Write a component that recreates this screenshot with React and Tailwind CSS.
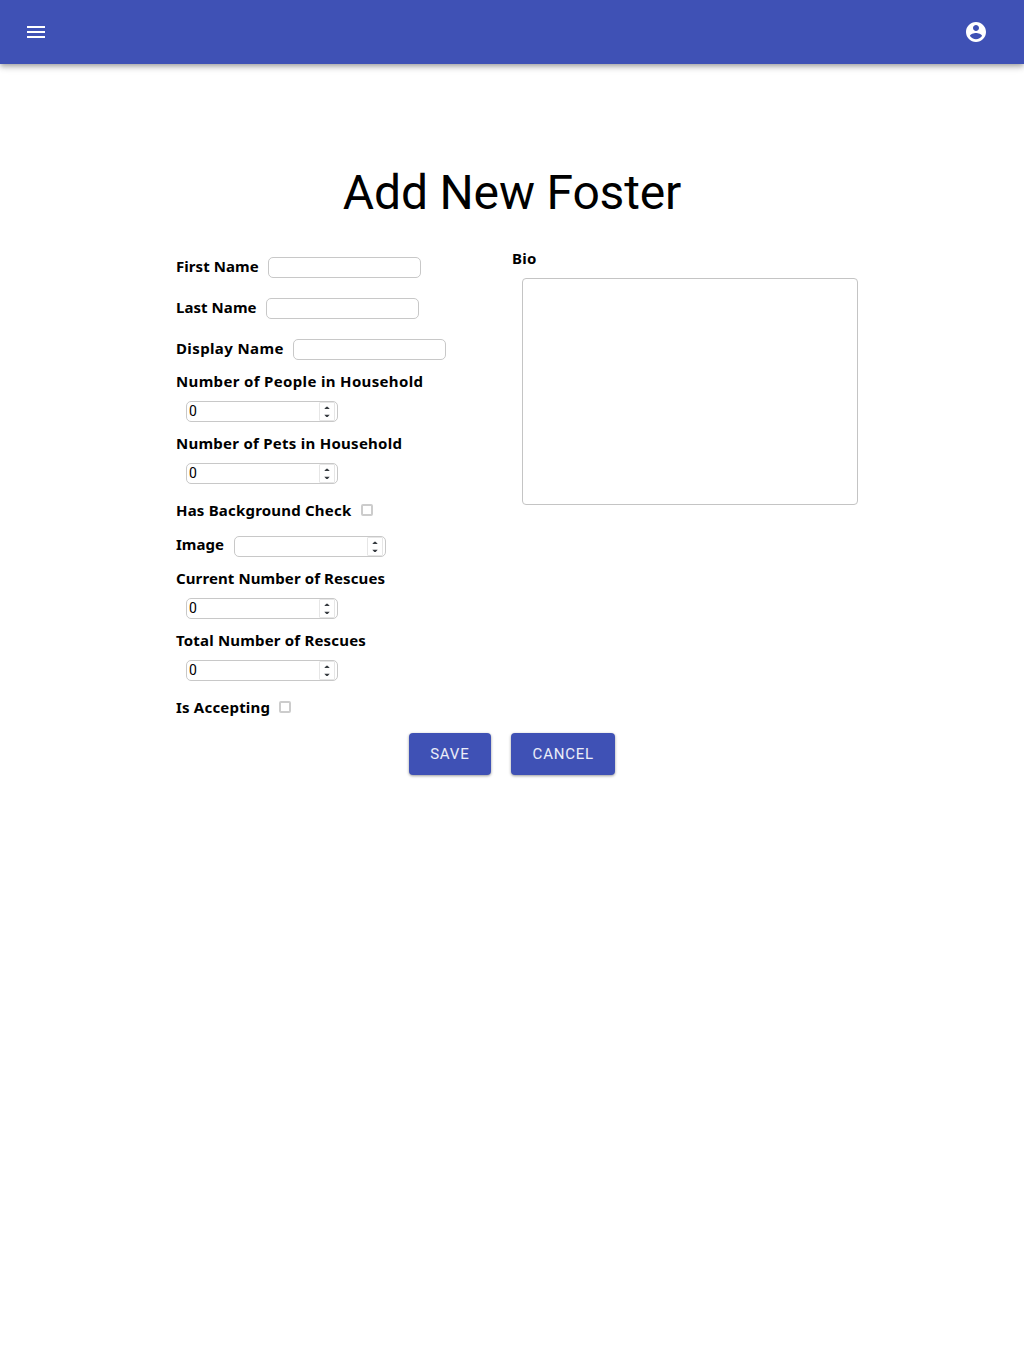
function Spinner() {
  return (
    <span className="mr-[2px] flex h-[19px] w-[16px] items-center justify-center rounded-[1px] border border-[#e6e6e6] bg-white">
      <svg width="6" height="13" viewBox="0 0 6 13" fill="#363b40">
        <path d="M0.3 4h5.4L3.7 1.8h-1.4zM0.3 9.8h5.4L3.7 12h-1.4z" />
      </svg>
    </span>
  );
}

function Field({ value, number, className = "" }) {
  return (
    <span className={`ml-[10px] flex h-[21px] shrink-0 justify-between rounded-[5px] border border-[#c8c8c8] bg-white pl-[2px] ${number ? "w-[152px]" : "w-[153px]"} ${className}`}>
      <span className="font-['Roboto',sans-serif] text-[14px] leading-[19px]">{value}</span>
      {number && <Spinner />}
    </span>
  );
}

function Label({ children, className = "" }) {
  return (
    <span className={`block shrink-0 whitespace-nowrap font-['Noto_Sans',sans-serif] text-[15px] font-bold leading-[22px] ${className}`}>
      {children}
    </span>
  );
}

function InlineField({ label, labelClass, ...rest }) {
  return (
    <div className="flex h-[41px] items-start pt-[10px]">
      <Label className={labelClass}>{label}</Label>
      <Field {...rest} />
    </div>
  );
}

function StackedField({ label, labelClass }) {
  return (
    <div className="h-[62px]">
      <Label className={labelClass}>{label}</Label>
      <Field value="0" number className="mt-[9px]" />
    </div>
  );
}

function CheckField({ label, labelClass }) {
  return (
    <div className="flex h-8 items-start pt-[5px]">
      <Label className={labelClass}>{label}</Label>
      <span className="ml-[10px] mt-[5px] h-[12px] w-[12px] rounded-[2px] border-2 border-[#cccccc]" />
    </div>
  );
}

function Button({ children, className }) {
  return (
    <button className={`h-[42px] rounded-[4px] bg-[#3f51b5] text-[15px] tracking-[0.8px] text-white/90 shadow-[0_1px_3px_rgba(0,0,0,0.4)] ${className}`}>
      {children}
    </button>
  );
}

export default function App() {
  return (
    <div className="min-h-screen bg-white font-['Roboto',sans-serif] text-black">
      <header className="flex h-16 items-center justify-between bg-[#3f51b5] pl-6 pr-9 text-white shadow-[0px_2px_4px_-1px_rgba(0,0,0,0.2),0px_4px_5px_0px_rgba(0,0,0,0.14),0px_1px_10px_0px_rgba(0,0,0,0.12)]">
        <svg width="24" height="24" viewBox="0 0 24 24" fill="currentColor">
          <path d="M3 18h18v-2H3v2zm0-5h18v-2H3v2zm0-7v2h18V6H3z" />
        </svg>
        <svg width="24" height="24" viewBox="0 0 24 24" fill="currentColor">
          <path d="M12 2C6.48 2 2 6.48 2 12s4.48 10 10 10 10-4.48 10-10S17.52 2 12 2zm0 3c1.66 0 3 1.34 3 3s-1.34 3-3 3-3-1.34-3-3 1.34-3 3-3zm0 14.2c-2.5 0-4.71-1.28-6-3.22.03-1.99 4-3.08 6-3.08 1.99 0 5.97 1.09 6 3.08-1.29 1.94-3.5 3.22-6 3.22z" />
        </svg>
      </header>
      <main className="pt-[101px]">
        <h1 className="h-14 text-center text-[48px] leading-[56px] tracking-[-0.17px]">Add New Foster</h1>
        <form className="mx-auto mt-[26px] grid w-[672px] grid-cols-2">
          <div>
            <InlineField label="First Name" labelClass="w-[82.4px] -mt-[2px] tracking-[0.06px]" />
            <InlineField label="Last Name" labelClass="w-[80.4px] -mt-[2px] tracking-[0.06px]" />
            <InlineField label="Display Name" labelClass="w-[107.4px] -mt-[2px] tracking-[0.38px]" />
            <StackedField label="Number of People in Household" labelClass="tracking-[0.34px]" />
            <StackedField label="Number of Pets in Household" labelClass="tracking-[0.26px]" />
            <CheckField label="Has Background Check" labelClass="w-[175px] tracking-[0.2px]" />
            <InlineField label="Image" labelClass="w-[48px] -mt-[3px]" number />
            <StackedField label="Current Number of Rescues" labelClass="tracking-[0.1px]" />
            <StackedField label="Total Number of Rescues" labelClass="tracking-[0.18px]" />
            <CheckField label="Is Accepting" labelClass="w-[93.4px] tracking-[0.2px]" />
          </div>
          <div>
            <Label className="tracking-[0.3px]">Bio</Label>
            <div className="ml-[10px] mt-[9px] h-[227px] w-[336px] rounded-[4px] border border-[#c4c4c4]" />
          </div>
        </form>
        <div className="mt-[10px] flex justify-center gap-5">
          <Button className="w-[82.6px]">SAVE</Button>
          <Button className="w-[104.4px]">CANCEL</Button>
        </div>
      </main>
    </div>
  );
}
